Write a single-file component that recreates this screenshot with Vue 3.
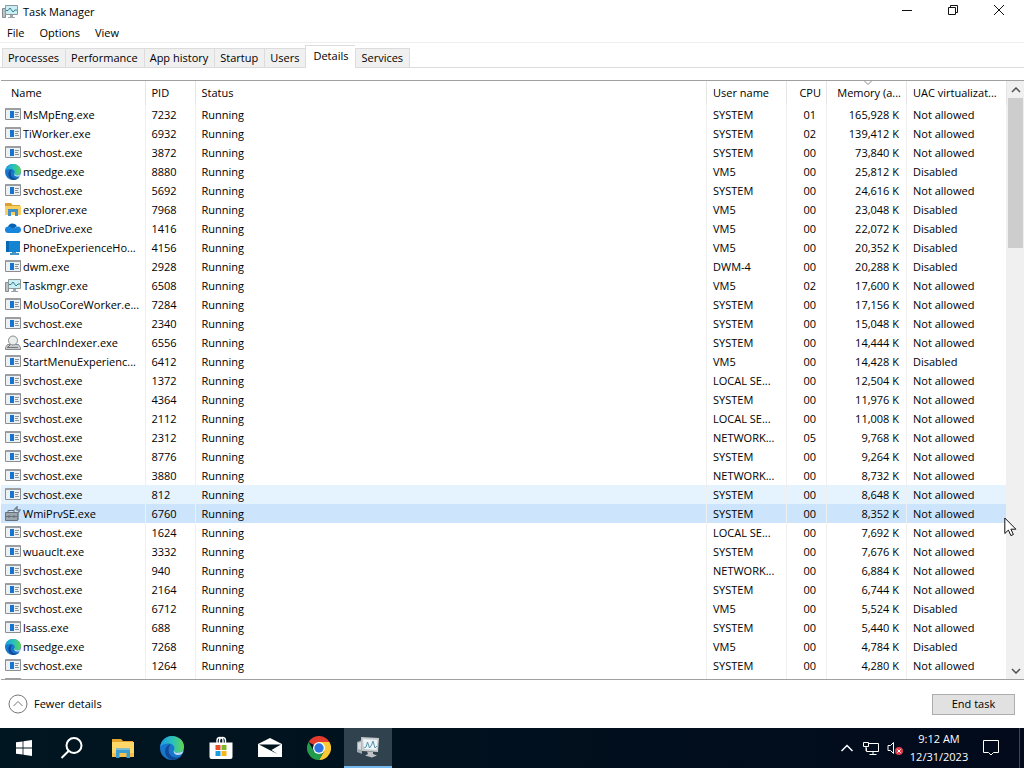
<template>
    <div class="desktop">
        <main class="window">
            <header class="title-bar">
                <svg class="title-icon" viewBox="0 0 16 16"><use href="#icon-monitor" /></svg>
                <h1>Task Manager</h1>
                <div class="window-controls">
                    <button aria-label="Minimize">
                        <svg viewBox="0 0 12 12"><path d="M1 6.500h10" /></svg>
                    </button>
                    <button aria-label="Restore">
                        <svg viewBox="0 0 12 12"><path d="M1.500 3.500h7v7h-7zM3.500 3.500v-2h7v7h-2" /></svg>
                    </button>
                    <button aria-label="Close">
                        <svg viewBox="0 0 12 12"><path d="M1 1l10 10M11 1L1 11" /></svg>
                    </button>
                </div>
            </header>

            <nav class="menu-bar">
                <button v-for="item in menus" :key="item">{{ item }}</button>
            </nav>

            <div class="tabs" role="tablist">
                <button
                    v-for="tab in tabs"
                    :key="tab"
                    class="tab"
                    :class="{ active: tab === currentTab }"
                    role="tab"
                    :aria-selected="tab === currentTab"
                    @click="currentTab = tab">
                    {{ tab }}
                </button>
            </div>

            <section class="list">
                <div class="list-body">
                    <table>
                        <colgroup>
                            <col class="col-name">
                            <col class="col-pid">
                            <col>
                            <col class="col-user">
                            <col class="col-cpu">
                            <col class="col-memory">
                            <col class="col-uac">
                        </colgroup>
                        <thead>
                            <tr>
                                <th class="name">Name</th>
                                <th>PID</th>
                                <th>Status</th>
                                <th>User name</th>
                                <th class="cpu">CPU</th>
                                <th class="memory">
                                    <svg class="sort" viewBox="0 0 8 4"><path d="M0.500 0l3.500 3.500L7.500 0" /></svg>
                                    Memory (a...
                                </th>
                                <th>UAC virtualizat...</th>
                            </tr>
                        </thead>
                        <tbody>
                            <tr
                                v-for="(row, index) in processes"
                                :key="index"
                                :class="{ hovered: row.pid === '812', selected: row.pid === selectedPid }"
                                @click="selectedPid = row.pid">
                                <td class="name">
                                    <div class="process">
                                        <svg viewBox="0 0 16 16"><use :href="'#icon-' + row.icon" /></svg>
                                        <span>{{ row.name }}</span>
                                    </div>
                                </td>
                                <td>{{ row.pid }}</td>
                                <td>{{ row.pid && 'Running' }}</td>
                                <td>{{ row.user }}</td>
                                <td class="cpu">{{ row.cpu }}</td>
                                <td class="memory">{{ row.memory }}</td>
                                <td>{{ row.uac }}</td>
                            </tr>
                        </tbody>
                    </table>
                </div>
                <div class="scrollbar">
                    <button aria-label="Scroll up"><svg viewBox="0 0 10 6"><path d="M1 5l4-4 4 4" /></svg></button>
                    <div class="thumb"></div>
                    <button aria-label="Scroll down"><svg viewBox="0 0 10 6"><path d="M1 1l4 4 4-4" /></svg></button>
                </div>
            </section>

            <footer class="footer">
                <button class="fewer">
                    <svg viewBox="0 0 20 20"><circle cx="10" cy="10" r="9" /><path d="M5.500 12L10 7.500l4.500 4.500" /></svg>
                    Fewer details
                </button>
                <button class="end-task">End task</button>
            </footer>
        </main>

        <div class="taskbar">
            <button aria-label="Start">
                <svg viewBox="0 0 24 24">
                    <path fill="#fff" d="M4 6.300l6.600-.9v6.200H4zM11.400 5.300L20 4v7.600h-8.600zM4 12.400h6.600v6.200L4 17.700zM11.400 12.400H20V20l-8.600-1.300z" />
                </svg>
            </button>
            <button aria-label="Search">
                <svg viewBox="0 0 24 24">
                    <g fill="none" stroke="#fff" stroke-width="2"><circle cx="14" cy="9.500" r="7.500" /><path d="M8.600 15L1.500 22" /></g>
                </svg>
            </button>
            <div class="apps">
                <button aria-label="File Explorer">
                    <svg viewBox="0 0 24 24">
                        <path fill="#e5a32c" d="M1 3h9l2 2h10v4H1z" />
                        <path fill="#ffd668" d="M1 6h22v15H1z" />
                        <path fill="#f7c04a" d="M1 17h22v4H1z" />
                        <path fill="#3c9dd0" d="M5 12.500h14V22h-3.500v-5h-7v5H5z" />
                        <path fill="#76bcdc" d="M5 12.500h14v1.500H5z" />
                    </svg>
                </button>
                <button aria-label="Microsoft Edge">
                    <svg viewBox="0 0 16 16"><use href="#icon-edge" /></svg>
                </button>
                <button aria-label="Microsoft Store">
                    <svg viewBox="0 0 24 24">
                        <path fill="none" stroke="#fff" stroke-width="1.400" d="M8 7V4.500a3 3 0 0 1 6 0V7M10.500 7V4.500a3 3 0 0 1 6 0V7" />
                        <path fill="#fff" d="M.5 6.500h23V21q0 2-2 2h-19q-2 0-2-2z" />
                        <path fill="#e84f2b" d="M6.500 9h5v5h-5z" />
                        <path fill="#7db52c" d="M12.500 9h5v5h-5z" />
                        <path fill="#1b9de2" d="M6.500 15h5v5h-5z" />
                        <path fill="#f7b517" d="M12.500 15h5v5h-5z" />
                    </svg>
                </button>
                <button aria-label="Mail">
                    <svg viewBox="0 0 24 24">
                        <path fill="#fff" d="M0 8l12-6 12 6v13H0z" />
                        <path fill="#001520" d="M1 8.500h22l-9.500 5.500 6 4-8-4z" />
                    </svg>
                </button>
                <button aria-label="Google Chrome">
                    <svg viewBox="0 0 24 24">
                        <path fill="#e33b2e" d="M12 12L1.600 6A12 12 0 0 1 22.400 6H12z" />
                        <path fill="#fcc934" d="M22.400 6A12 12 0 0 1 12 24l5.200-9L12 6z" />
                        <path fill="#229b4b" d="M12 24A12 12 0 0 1 1.600 6l5.200 9 5.200 3 5.200-3z" />
                        <circle cx="12" cy="12" r="6" fill="#fff" />
                        <circle cx="12" cy="12" r="4.700" fill="#2d73e4" />
                    </svg>
                </button>
                <button class="running" aria-label="Task Manager">
                    <svg viewBox="0 0 24 24">
                        <path fill="#a3a8aa" d="M1 7l5-2v14l-5-2z" />
                        <path fill="#d9dcde" d="M2 8l3-1v8l-3-1z" />
                        <path fill="#c6cacc" d="M5 2l18 1-1 14-16-1z" />
                        <path fill="#eef5f7" d="M7 4l14.500 1-1 10L8 14z" />
                        <path fill="none" stroke="#5794ac" d="M8 13l2-1 1.500-5 2 6 2-3 1.500-4 2 7 2-2" />
                        <path fill="#bfc3c5" d="M11 16.500l6 .5v2l4 1.500-5 2-7-2 3-1.500z" />
                    </svg>
                </button>
            </div>
            <div class="tray">
                <button class="tray-icon" aria-label="Show hidden icons">
                    <svg viewBox="0 0 16 16"><path stroke-width="1.500" d="M2.500 11L8 5.500l5.500 5.500" /></svg>
                </button>
                <button class="tray-icon" aria-label="Network">
                    <svg viewBox="0 0 16 16"><path d="M5 3.500h10.500v8H3.500V8M10 11.500v3M6.500 14.500h7M.5 2.500h5v4h-5zM3 6.500V11" /></svg>
                </button>
                <button class="tray-icon" aria-label="Volume muted">
                    <svg viewBox="0 0 16 16">
                        <path d="M1 5.500h2.500L6.500 2.500v11L3.500 10.500H1z" />
                        <circle cx="12" cy="11" r="4" fill="#dc3e4b" stroke="none" />
                        <path d="M10.300 9.300l3.400 3.400M13.700 9.300l-3.400 3.400" />
                    </svg>
                </button>
                <button class="clock"><span>9:12 AM</span><span>12/31/2023</span></button>
                <button class="notifications" aria-label="Notifications">
                    <svg viewBox="0 0 18 18"><path d="M1.500 1.500h15v12h-5L9 16l-2.500-2.500h-5z" /></svg>
                </button>
            </div>
        </div>

        <svg class="cursor" viewBox="0 0 13 20">
            <path d="M.8 1v15.500l3.600-3.400 2.500 5.500 2.500-1.100-2.500-5.300h5z" />
        </svg>

        <!-- shared process icons -->
        <svg class="symbols" aria-hidden="true">
            <defs>
                <linearGradient id="edge-top" x1="0" y1="0" x2="1" y2="0">
                    <stop offset="0" stop-color="#1b9de2" />
                    <stop offset=".55" stop-color="#2cc3b4" />
                    <stop offset="1" stop-color="#62d552" />
                </linearGradient>
            </defs>
            <symbol id="icon-app" viewBox="0 0 16 16">
                <path fill="#fff" stroke="#8b8f92" d="M.5 1.500h15v11H.5z" />
                <path fill="#9b9fa1" d="M1 1h14v2H1z" />
                <path fill="#edf1f4" d="M1 3h14v9H1z" />
                <path fill="#1674ce" d="M5 4h4v7H5z" />
                <path stroke="#8b9298" d="M10 5.500h4M10 7.500h3M10 9.500h4" />
            </symbol>
            <symbol id="icon-edge" viewBox="0 0 16 16">
                <circle cx="8" cy="8" r="8" fill="#1876cd" />
                <path fill="url(#edge-top)" d="M.1 7.200C.8 2.800 4.100 0 8 0c4.700 0 8 3.400 8 7 0 2.600-1.800 4.200-4.200 4.200-1.500 0-2.800-.6-2.800-1.300 0-.4.600-.7.600-1.800C9.600 6.300 7.800 5 5.400 5 3.200 5 1.100 5.900.1 7.200z" />
                <path fill="#114a96" d="M5.700 9.500c0 3 2.500 5 5.300 5 1.300 0 2.400-.4 3.500-1.300C13 15 10.500 16 8 16c-3-1-4.600-3.200-4.600-5.700C3.400 7.600 5.200 6 7.200 5.500 6.300 6.500 5.700 7.800 5.700 9.500z" />
                <path fill="#fff" d="M9.200 9.600c.2 1 1.300 1.600 2.700 1.600 1.600 0 3-.6 3.800-1.800-.2 2.200-1.600 3.300-3.600 3.300-2.100 0-3.300-1.500-2.900-3.100z" opacity=".7" />
            </symbol>
            <symbol id="icon-folder" viewBox="0 0 16 16">
                <path fill="#dca032" d="M0 1h6l1.500 2H15v3H0z" />
                <path fill="#f8ce61" d="M0 4h16v9H0z" />
                <path fill="#4290c6" d="M3 7h10v7h-3v-4H6v4H3z" />
            </symbol>
            <symbol id="icon-cloud" viewBox="0 0 16 16">
                <path fill="#0a62b4" d="M3 6a4.800 4.800 0 0 1 9-.8L5 10z" />
                <path fill="#1686dc" d="M3.300 12A3.200 3.200 0 0 1 3 5.600c2-.3 3.400.5 4.700 1.800L13 5.500c4 .2 4 6.500 0 6.500z" />
            </symbol>
            <symbol id="icon-phone" viewBox="0 0 16 16">
                <path fill="#0968b4" d="M1 1h14v11H1z" />
                <path fill="#1685d1" d="M4 1h11v11H4z" />
                <path fill="#4494c4" d="M7 12h4v1h3v2H5v-2h2z" />
            </symbol>
            <symbol id="icon-monitor" viewBox="0 0 16 16">
                <path fill="#bcc3c5" stroke="#858c8f" d="M.5 4.500h3v9h-3z" />
                <path fill="#c9eff4" stroke="#8c989c" d="M3.500 1.500h12v9h-12z" />
                <path fill="none" stroke="#357f8b" d="M4 6.500h2L8 4l3 4 2-2h2" />
                <path fill="#9da7aa" d="M8 11h3v2h2v1H6v-1h2z" />
            </symbol>
            <symbol id="icon-search" viewBox="0 0 16 16">
                <path fill="#c9cccd" stroke="#85898b" d="M2.500 9.500h11l2 3v2H.5v-2z" />
                <circle cx="8" cy="5.500" r="4.500" fill="#eceeee" stroke="#898d8f" />
                <path stroke="#74787a" d="M5 10l-3 3M3 12.500h10" />
            </symbol>
            <symbol id="icon-tools" viewBox="0 0 16 16">
                <path fill="#9ca6ac" stroke="#65727c" d="M.5 6.500h12v8H.5z" />
                <path fill="none" stroke="#65727c" d="M3 6V4.500h6V6M0 10.500h13M4 9v3M9 9v3" />
                <path fill="none" stroke="#718292" stroke-width="1.500" d="M9 4l3-3v3h3l-2 3v7" />
            </symbol>
        </svg>
    </div>
</template>

<script setup>
import { ref } from 'vue'

const menus = ['File', 'Options', 'View']
const tabs = ['Processes', 'Performance', 'App history', 'Startup', 'Users', 'Details', 'Services']
const currentTab = ref('Details')
const selectedPid = ref('6760')

const data = [
    ['app', 'MsMpEng.exe', '7232', 'SYSTEM', '01', '165,928 K', 'Not allowed'],
    ['app', 'TiWorker.exe', '6932', 'SYSTEM', '02', '139,412 K', 'Not allowed'],
    ['app', 'svchost.exe', '3872', 'SYSTEM', '00', '73,840 K', 'Not allowed'],
    ['edge', 'msedge.exe', '8880', 'VM5', '00', '25,812 K', 'Disabled'],
    ['app', 'svchost.exe', '5692', 'SYSTEM', '00', '24,616 K', 'Not allowed'],
    ['folder', 'explorer.exe', '7968', 'VM5', '00', '23,048 K', 'Disabled'],
    ['cloud', 'OneDrive.exe', '1416', 'VM5', '00', '22,072 K', 'Disabled'],
    ['phone', 'PhoneExperienceHo...', '4156', 'VM5', '00', '20,352 K', 'Disabled'],
    ['app', 'dwm.exe', '2928', 'DWM-4', '00', '20,288 K', 'Disabled'],
    ['monitor', 'Taskmgr.exe', '6508', 'VM5', '02', '17,600 K', 'Not allowed'],
    ['app', 'MoUsoCoreWorker.e...', '7284', 'SYSTEM', '00', '17,156 K', 'Not allowed'],
    ['app', 'svchost.exe', '2340', 'SYSTEM', '00', '15,048 K', 'Not allowed'],
    ['search', 'SearchIndexer.exe', '6556', 'SYSTEM', '00', '14,444 K', 'Not allowed'],
    ['app', 'StartMenuExperienc...', '6412', 'VM5', '00', '14,428 K', 'Disabled'],
    ['app', 'svchost.exe', '1372', 'LOCAL SE...', '00', '12,504 K', 'Not allowed'],
    ['app', 'svchost.exe', '4364', 'SYSTEM', '00', '11,976 K', 'Not allowed'],
    ['app', 'svchost.exe', '2112', 'LOCAL SE...', '00', '11,008 K', 'Not allowed'],
    ['app', 'svchost.exe', '2312', 'NETWORK...', '05', '9,768 K', 'Not allowed'],
    ['app', 'svchost.exe', '8776', 'SYSTEM', '00', '9,264 K', 'Not allowed'],
    ['app', 'svchost.exe', '3880', 'NETWORK...', '00', '8,732 K', 'Not allowed'],
    ['app', 'svchost.exe', '812', 'SYSTEM', '00', '8,648 K', 'Not allowed'],
    ['tools', 'WmiPrvSE.exe', '6760', 'SYSTEM', '00', '8,352 K', 'Not allowed'],
    ['app', 'svchost.exe', '1624', 'LOCAL SE...', '00', '7,692 K', 'Not allowed'],
    ['app', 'wuauclt.exe', '3332', 'SYSTEM', '00', '7,676 K', 'Not allowed'],
    ['app', 'svchost.exe', '940', 'NETWORK...', '00', '6,884 K', 'Not allowed'],
    ['app', 'svchost.exe', '2164', 'SYSTEM', '00', '6,744 K', 'Not allowed'],
    ['app', 'svchost.exe', '6712', 'VM5', '00', '5,524 K', 'Disabled'],
    ['app', 'lsass.exe', '688', 'SYSTEM', '00', '5,440 K', 'Not allowed'],
    ['edge', 'msedge.exe', '7268', 'VM5', '00', '4,784 K', 'Disabled'],
    ['app', 'svchost.exe', '1264', 'SYSTEM', '00', '4,280 K', 'Not allowed'],
    ['app', '', '', '', '', '', '']
]

const processes = data.map(([icon, name, pid, user, cpu, memory, uac]) => ({
    icon, name, pid, user, cpu, memory, uac
}))
</script>

<style>
body {
    margin: 0;
}
</style>

<style scoped>
.desktop {
    display: flex;
    flex-direction: column;
    height: 100vh;
    overflow: hidden;
    position: relative;
    color: #000;
    font-family: "Open Sans", "Noto Sans", sans-serif;
    font-size: 11px;
    line-height: 18px;
}

button {
    margin: 0;
    padding: 0;
    border: none;
    background: none;
    color: inherit;
    font: inherit;
    white-space: nowrap;
}

svg {
    display: block;
    flex: none;
}

.window {
    flex: 1;
    min-height: 0;
    display: flex;
    flex-direction: column;
    background: #fff;
}

.title-bar {
    display: flex;
    align-items: center;
    height: 24px;
    padding-left: 2px;
}

.title-icon {
    width: 16px;
    height: 16px;
    margin-right: 5px;
}

.title-bar h1 {
    margin: 0;
    font-size: 11px;
    font-weight: 400;
}

.window-controls {
    display: flex;
    align-self: flex-start;
    margin-left: auto;
    padding-right: 2px;
}

.window-controls button {
    width: 46px;
    height: 20px;
    display: flex;
    align-items: center;
    justify-content: center;
}

.window-controls svg {
    width: 12px;
    height: 12px;
    fill: none;
    stroke: #111;
}

.menu-bar {
    display: flex;
    gap: 15px;
    height: 18px;
    padding-left: 7px;
    border-bottom: 1px solid #eee;
}

.tabs {
    display: flex;
    align-items: flex-end;
    height: 24px;
    padding-left: 2px;
    border-bottom: 1px solid #dcdcdc;
}

.tab {
    height: 19px;
    padding: 0 6px 0 5px;
    background: #f0f0f0;
    border: 1px solid #dcdcdc;
    border-width: 1px 0 0 1px;
}

.tab:last-child {
    border-right-width: 1px;
}

.tab.active {
    height: 23px;
    margin-bottom: -1px;
    padding: 0 7px 3px;
    background: #fff;
}

.list {
    flex: 1;
    min-height: 0;
    display: flex;
    margin: 12px 0 0 1px;
    border: 1px solid #a0a0a0;
    border-width: 1px 0;
}

.list-body {
    flex: 1;
    overflow: hidden;
}

table {
    width: 100%;
    table-layout: fixed;
    border-collapse: collapse;
}

.col-name {
    width: 144px;
}

.col-pid {
    width: 50px;
}

.col-user,
.col-memory {
    width: 80px;
}

.col-cpu {
    width: 40px;
}

.col-uac {
    width: 100px;
}

th,
td {
    height: 19px;
    padding: 0 0 0 6px;
    border-right: 1px solid #f0f0f0;
    font-weight: 400;
    text-align: left;
    white-space: nowrap;
}

th {
    height: 24px;
    border-color: #e5e5e5;
}

th.name {
    padding-left: 10px;
}

td.name {
    padding-left: 4px;
}

.cpu {
    padding-right: 5px;
    text-align: right;
}

td.cpu {
    padding-right: 10px;
}

.memory {
    padding: 0 7px 0 0;
    text-align: right;
    position: relative;
}

th.memory {
    padding-right: 5px;
}

.sort {
    position: absolute;
    top: 0;
    left: 37px;
    width: 8px;
    height: 4px;
    fill: none;
    stroke: #888;
}

.process {
    display: flex;
    align-items: center;
    gap: 2px;
}

.process svg {
    width: 16px;
    height: 16px;
}

.hovered {
    background: #e5f3ff;
}

.selected {
    background: #cce4fc;
}

.scrollbar {
    width: 17px;
    display: flex;
    flex-direction: column;
    background: #f0f0f0;
}

.scrollbar button {
    height: 17px;
    display: flex;
    align-items: center;
    justify-content: center;
}

.scrollbar button:last-child {
    margin-top: auto;
}

.scrollbar svg {
    width: 10px;
    height: 6px;
    fill: none;
    stroke: #505050;
    stroke-width: 1.500;
}

.thumb {
    height: 25%;
    margin: 0 1px;
    background: #cdcdcd;
}

.footer {
    display: flex;
    align-items: center;
    justify-content: space-between;
    height: 48px;
    padding: 0 9px 0 8px;
}

.fewer {
    display: flex;
    align-items: center;
    gap: 6px;
}

.fewer svg {
    width: 20px;
    height: 20px;
    fill: none;
    stroke: #777;
}

.end-task {
    width: 83px;
    height: 21px;
    background: #e1e1e1;
    border: 1px solid #adadad;
}

.taskbar {
    display: flex;
    height: 40px;
    background: linear-gradient(90deg, #001620, #020a1c);
    color: #fff;
}

.taskbar button {
    width: 48px;
    display: flex;
    align-items: center;
    justify-content: center;
}

.taskbar svg {
    width: 24px;
    height: 24px;
}

.apps {
    display: flex;
    gap: 1px;
    margin-left: 3px;
}

.taskbar .running {
    background: #2f424d;
    border-bottom: 2px solid #76b9ed;
}

.tray {
    display: flex;
    margin-left: auto;
    margin-right: 4px;
    padding-right: 8px;
    border-right: 1px solid #445;
}

.taskbar .tray-icon {
    width: 24px;
}

.taskbar .tray svg {
    width: 16px;
    height: 16px;
    fill: none;
    stroke: #fff;
}

.taskbar .clock {
    width: 64px;
    flex-direction: column;
}

.taskbar .notifications {
    width: 40px;
}

.taskbar .notifications svg {
    width: 18px;
    height: 18px;
}

.cursor {
    position: absolute;
    top: 517px;
    left: 1004px;
    width: 13px;
    height: 20px;
    fill: #fff;
    stroke: #111;
    pointer-events: none;
}

.symbols {
    position: absolute;
    width: 0;
    height: 0;
}
</style>
